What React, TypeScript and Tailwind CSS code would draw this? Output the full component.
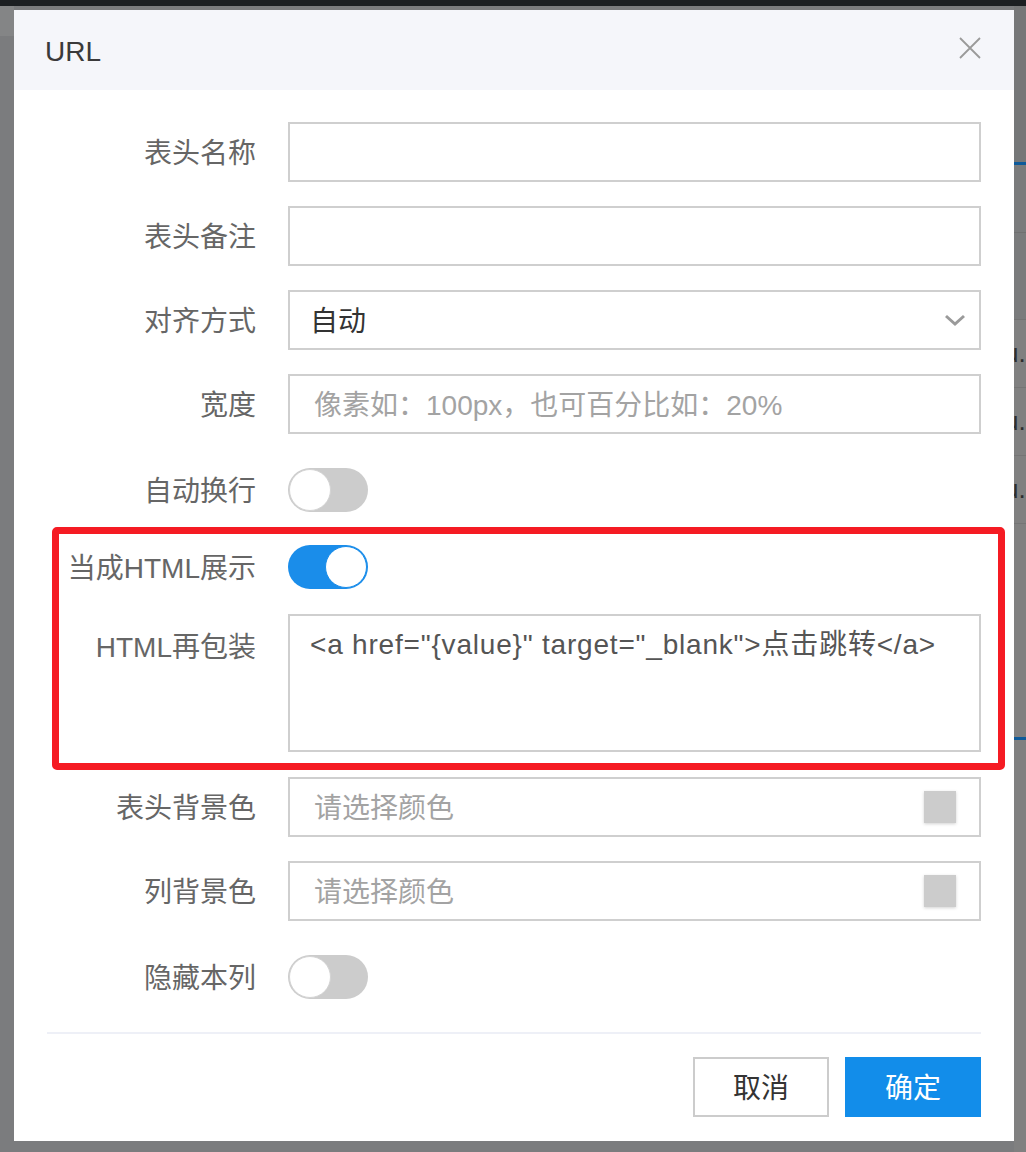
import React from "react";

const font = "font-['Liberation_Sans','Noto_Sans_CJK_SC',sans-serif]";

const Label = ({ text, top = false }: { text: string; top?: boolean }) => (
  <div
    className={`w-[241px] shrink-0 pr-[32px] h-[60px] pt-[4px] text-right text-[28px] leading-[56px] text-[#666666] ${
      top ? "self-start pt-[6px]" : ""
    }`}
  >
    {text}
  </div>
);

const TextInput = ({ placeholder }: { placeholder?: string }) => (
  <div className="flex-1 h-[60px] border-2 border-[#cfcfcf] flex items-center pl-[24px] pt-[4px] text-[28px] text-[#a3a3a3]">
    {placeholder}
  </div>
);

const Toggle = ({ on = false }: { on?: boolean }) => (
  <div
    className={`w-[80px] h-[44px] rounded-full flex items-center p-[1px] ${
      on ? "bg-[#1a8dea] justify-end" : "bg-[#cccccc] justify-start"
    }`}
  >
    <div
      className={`w-[42px] h-[42px] rounded-full bg-white border ${
        on ? "border-[#1a8dea]" : "border-[#d4d4d4]"
      }`}
    />
  </div>
);

const ColorInput = () => (
  <div className="flex-1 h-[60px] border-2 border-[#cfcfcf] flex items-center justify-between pl-[24px] pr-[23px] text-[28px] text-[#a3a3a3]">
    <span className="pt-[4px]">请选择颜色</span>
    <div className="w-[32px] h-[32px] bg-[#cccccc] shadow-[0_1px_3px_rgba(0,0,0,0.18)]" />
  </div>
);

const BgRow = () => (
  <div className="h-[68px] border-b border-[#757575] flex items-center overflow-hidden">
    <span className="-ml-[10px] text-[26px] text-[#2e2e2e] whitespace-nowrap">u.</span>
  </div>
);

export default function App() {
  return (
    <div className={`w-[1026px] h-[1152px] bg-[#7b7c7e] flex flex-col overflow-hidden ${font}`}>
      <div className="h-[6px] bg-[#1c1f22] shrink-0" />
      <div className="flex flex-1">
        {/* page behind the overlay, left */}
        <div className="w-[14px] shrink-0 flex flex-col">
          <div className="h-[30px] bg-[#848586]" />
        </div>

        {/* dialog */}
        <div className="w-[1000px] shrink-0 pt-[4px]">
          <div className="bg-white flex flex-col">
            <div className="h-[80px] bg-[#f5f6fa] flex items-center justify-between pl-[31px] pr-[33px]">
              <span className="text-[28px] text-[#3a3a3a] pt-[3px]">URL</span>
              <svg width="22" height="22" viewBox="0 0 22 22" className="-mt-[5px]">
                <path d="M1 1 L21 21 M21 1 L1 21" stroke="#9a9a9a" strokeWidth="1.8" fill="none" />
              </svg>
            </div>

            <div className="px-[33px] pt-[32px] pb-[24px] flex flex-col">
              <div className="flex items-center">
                <Label text="表头名称" />
                <TextInput />
              </div>
              <div className="flex items-center mt-[24px]">
                <Label text="表头备注" />
                <TextInput />
              </div>
              <div className="flex items-center mt-[24px]">
                <Label text="对齐方式" />
                <div className="flex-1 h-[60px] border-2 border-[#cfcfcf] flex items-center justify-between pl-[20px] pr-[13px] text-[28px] text-[#333333]">
                  <span className="pt-[4px]">自动</span>
                  <svg width="22" height="13" viewBox="0 0 22 13">
                    <polyline points="2,2 11,10 20,2" stroke="#9a9a9a" strokeWidth="3" fill="none" />
                  </svg>
                </div>
              </div>
              <div className="flex items-center mt-[24px]">
                <Label text="宽度" />
                <TextInput placeholder="像素如：100px，也可百分比如：20%" />
              </div>
              <div className="flex items-center h-[64px] mt-[24px]">
                <Label text="自动换行" />
                <Toggle />
              </div>

              {/* highlighted block */}
              <div className="mt-[5px] ml-[5px] -mr-[24px] border-[7px] border-[#f51b23] rounded-[5px] pt-[1px] pb-[11px]">
                <div className="-ml-[12px] mr-[17px] flex flex-col">
                  <div className="flex items-center h-[64px]">
                    <Label text="当成HTML展示" />
                    <Toggle on />
                  </div>
                  <div className="flex mt-[15px]">
                    <Label text="HTML再包装" top />
                    <div className="flex-1 h-[138px] border-2 border-[#cfcfcf] pl-[20px] pt-[9px] text-[28px] leading-[40px] tracking-[0.8px] text-[#555555] whitespace-nowrap">
                      {'<a href="{value}" target="_blank">点击跳转</a>'}
                    </div>
                  </div>
                </div>
              </div>

              <div className="flex items-center mt-[7px]">
                <Label text="表头背景色" />
                <ColorInput />
              </div>
              <div className="flex items-center mt-[24px]">
                <Label text="列背景色" />
                <ColorInput />
              </div>
              <div className="flex items-center h-[64px] mt-[24px]">
                <Label text="隐藏本列" />
                <Toggle />
              </div>

              <div className="h-[2px] bg-[#eef0f7] mt-[23px]" />

              <div className="flex justify-end gap-[16px] mt-[23px]">
                <button className="w-[136px] h-[60px] border-2 border-[#cccccc] bg-white pt-[4px] text-[28px] text-[#333333]">
                  取消
                </button>
                <button className="w-[136px] h-[60px] bg-[#128dea] pt-[4px] text-[28px] text-white">
                  确定
                </button>
              </div>
            </div>
          </div>
        </div>

        {/* page behind the overlay, right */}
        <div className="w-[12px] shrink-0 flex flex-col">
          <div className="h-[156px] bg-[#767778]" />
          <div className="h-[3px] bg-[#0e5a9a]" />
          <div className="h-[68px] bg-[#7a7b7c] border-b border-[#707070]" />
          <div className="h-[87px] bg-[#7a7b7c] border-b border-[#727272]" />
          <div className="bg-[#808080] flex flex-col">
            <BgRow />
            <BgRow />
            <BgRow />
            <div className="h-[213px]" />
            <div className="h-[3px] bg-[#0e5a9a]" />
            <div className="h-[420px]" />
          </div>
        </div>
      </div>
    </div>
  );
}
